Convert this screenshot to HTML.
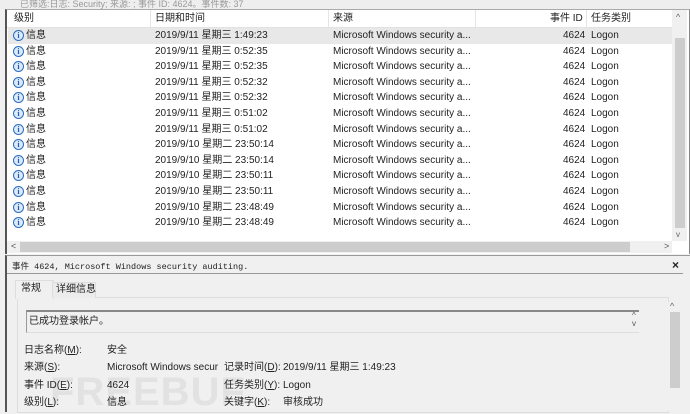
<!DOCTYPE html><html><head><meta charset="utf-8"><style>
body{margin:0;width:690px;height:411px;overflow:hidden;background:#f0f0f0;font-family:"Liberation Sans","Noto Sans CJK SC",sans-serif;font-size:10px;line-height:12px;color:#222;position:relative}
.a{position:absolute;white-space:nowrap}
.row{position:absolute;left:8px;width:664px;height:15.6px}
.row span{position:absolute;top:2px;line-height:12px}
.ic{position:absolute;left:5px;top:2px;width:9px;height:9px;border:1px solid #2a6cc0;border-radius:50%;background:#dbe9fb;font:bold 8px "Liberation Serif",serif;color:#1f5fb3;text-align:center;line-height:9px}
</style></head><body>
<div class="a" style="left:0;top:0;width:690px;height:9px;background:#eee;color:#999;font-size:9px;line-height:8px;padding-left:20px">已筛选:日志: Security; 来源: ; 事件 ID: 4624。事件数: 37</div>
<div class="a" style="left:5px;top:9px;width:682px;height:244px;background:#fff;border-left:2px solid #555;border-top:1px solid #aaa;border-right:1px solid #888"></div>
<div class="a" style="left:7px;top:10px;width:666px;height:17px;border-bottom:1px solid #e2e2e2;background:#fff"></div>
<div class="a" style="left:14px;top:13px">级别</div>
<div class="a" style="left:150px;top:10px;width:1px;height:17px;background:#e5e5e5"></div>
<div class="a" style="left:155px;top:13px">日期和时间</div>
<div class="a" style="left:328px;top:10px;width:1px;height:17px;background:#e5e5e5"></div>
<div class="a" style="left:333px;top:13px">来源</div>
<div class="a" style="left:475px;top:10px;width:1px;height:17px;background:#e5e5e5"></div>
<div class="a" style="left:550px;top:13px">事件 ID</div>
<div class="a" style="left:586px;top:10px;width:1px;height:17px;background:#e5e5e5"></div>
<div class="a" style="left:591px;top:13px">任务类别</div>
<div class="a" style="left:672px;top:10px;width:15px;height:231px;background:#f0f0f0"></div>
<div class="a" style="left:675px;top:38px;width:10px;height:190px;background:#cdcdcd"></div>
<div class="a" style="left:676px;top:11px;font-size:9px;color:#666">^</div>
<div class="a" style="left:676px;top:229px;font-size:8px;color:#666">v</div>
<div id="rows"></div>
<div class="a" style="left:7px;top:241px;width:665px;height:12px;background:#f0f0f0"></div>
<div class="a" style="left:20px;top:242px;width:610px;height:10px;background:#cdcdcd"></div>
<div class="a" style="left:11px;top:240px;font-size:9px;color:#555">&lt;</div>
<div class="a" style="left:664px;top:240px;font-size:9px;color:#555">&gt;</div>
<div class="a" style="left:5px;top:255px;width:683px;height:156px;border-left:2px solid #555;border-top:1px solid #999;background:#f0f0f0"></div>
<div class="a" style="left:12px;top:261px;font-family:'Liberation Mono','Noto Sans CJK SC',monospace;font-size:8.5px;color:#222">事件 4624, Microsoft Windows security auditing.</div>
<div class="a" style="left:672px;top:259px;font-weight:bold;font-size:12px">×</div>
<div class="a" style="left:7px;top:273px;width:676px;height:1px;background:#999"></div>
<div class="a" style="left:17px;top:297px;width:650px;height:114px;border:1px solid #ddd;background:#f0f0f0"></div>
<div class="a" style="left:15px;top:280px;width:37px;height:18px;background:#f0f0f0;border:1px solid #ddd;border-bottom:none"></div>
<div class="a" style="left:21px;top:283px">常规</div>
<div class="a" style="left:52px;top:282px;width:42px;height:15px;border:1px solid #ddd;border-bottom:none;background:#ececec"></div>
<div class="a" style="left:56px;top:284px">详细信息</div>
<div class="a" style="left:26px;top:310px;width:612px;height:20px;border-top:2px solid #888;border-left:1px solid #999;border-bottom:1px solid #ddd;background:#f0f0f0"></div>
<div class="a" style="left:29px;top:316px">已成功登录帐户。</div>
<div class="a" style="left:632px;top:312px;font-size:8px;color:#555;line-height:8px">^<br>v</div>
<div class="a" style="left:668px;top:302px;width:13px;height:109px;background:#f0f0f0"></div>
<div class="a" style="left:670px;top:312px;width:10px;height:76px;background:#cdcdcd"></div>
<div class="a" style="left:670px;top:300px;font-size:9px;color:#666">^</div>
<div class="a" style="left:50px;top:372px;font-size:40px;line-height:40px;font-weight:bold;color:rgba(205,205,205,.4);letter-spacing:1px">FREEBUF</div>
<div class="a" style="left:24px;top:345px">日志名称(<u>M</u>):</div><div class="a" style="left:107px;top:345px">安全</div>
<div class="a" style="left:24px;top:362px">来源(<u>S</u>):</div><div class="a" style="left:107px;top:362px">Microsoft Windows secur</div>
<div class="a" style="left:224px;top:362px">记录时间(<u>D</u>):</div><div class="a" style="left:283px;top:362px">2019/9/11 星期三 1:49:23</div>
<div class="a" style="left:24px;top:380px">事件 ID(<u>E</u>):</div><div class="a" style="left:107px;top:380px">4624</div>
<div class="a" style="left:224px;top:380px">任务类别(<u>Y</u>):</div><div class="a" style="left:283px;top:380px">Logon</div>
<div class="a" style="left:24px;top:397px">级别(<u>L</u>):</div><div class="a" style="left:107px;top:397px">信息</div>
<div class="a" style="left:224px;top:397px">关键字(<u>K</u>):</div><div class="a" style="left:283px;top:397px">审核成功</div>
<script>
var d=["2019/9/11 星期三 1:49:23","2019/9/11 星期三 0:52:35","2019/9/11 星期三 0:52:35","2019/9/11 星期三 0:52:32","2019/9/11 星期三 0:52:32","2019/9/11 星期三 0:51:02","2019/9/11 星期三 0:51:02","2019/9/10 星期二 23:50:14","2019/9/10 星期二 23:50:14","2019/9/10 星期二 23:50:11","2019/9/10 星期二 23:50:11","2019/9/10 星期二 23:48:49","2019/9/10 星期二 23:48:49"];
var h="";d.forEach(function(t,i){h+='<div class="row" style="top:'+(28+i*15.6)+'px;'+(i==0?'background:#e8e8e8':'')+'"><div class="ic">i</div><span style="left:18px">信息</span><span style="left:147px">'+t+'</span><span style="left:325px">Microsoft Windows security a...</span><span style="left:555px">4624</span><span style="left:583px">Logon</span></div>';});
document.getElementById("rows").innerHTML=h;
</script>
</body></html>
